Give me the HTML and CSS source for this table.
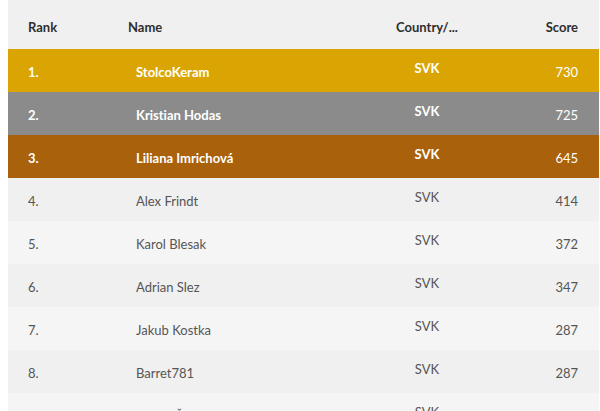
FILE: index.html
```html
<!DOCTYPE html>
<html>
<head>
<meta charset="utf-8">
<link rel="stylesheet" href="styles.css">
</head>
<body>
<table class="board">
  <thead>
    <tr class="head">
      <th class="c-rank">Rank</th>
      <th class="c-name">Name</th>
      <th class="c-country">Country/...</th>
      <th class="c-score">Score</th>
    </tr>
  </thead>
  <tbody>
    <tr class="top gold"><td class="c-rank">1.</td><td class="c-name">StolcoKeram</td><td class="c-country"><span>SVK</span></td><td class="c-score">730</td></tr>
    <tr class="top silver"><td class="c-rank">2.</td><td class="c-name">Kristian Hodas</td><td class="c-country"><span>SVK</span></td><td class="c-score">725</td></tr>
    <tr class="top bronze"><td class="c-rank">3.</td><td class="c-name">Liliana Imrichová</td><td class="c-country"><span>SVK</span></td><td class="c-score">645</td></tr>
    <tr class="odd"><td class="c-rank">4.</td><td class="c-name">Alex Frindt</td><td class="c-country"><span>SVK</span></td><td class="c-score">414</td></tr>
    <tr class="even"><td class="c-rank">5.</td><td class="c-name">Karol Blesak</td><td class="c-country"><span>SVK</span></td><td class="c-score">372</td></tr>
    <tr class="odd"><td class="c-rank">6.</td><td class="c-name">Adrian Slez</td><td class="c-country"><span>SVK</span></td><td class="c-score">347</td></tr>
    <tr class="even"><td class="c-rank">7.</td><td class="c-name">Jakub Kostka</td><td class="c-country"><span>SVK</span></td><td class="c-score">287</td></tr>
    <tr class="odd"><td class="c-rank">8.</td><td class="c-name">Barret781</td><td class="c-country"><span>SVK</span></td><td class="c-score">287</td></tr>
    <tr class="even"><td class="c-rank">9.</td><td class="c-name">Tomáš Šebo</td><td class="c-country"><span>SVK</span></td><td class="c-score">256</td></tr>
  </tbody>
</table>
</body>
</html>
```
FILE: styles.css
```css
html, body {
  margin: 0;
  padding: 0;
  background: #ffffff;
  overflow: hidden;
}
body {
  padding-left: 8px;
  font-family: Lato, "Open Sans", sans-serif;
  font-size: 13px;
  font-variant-ligatures: none;
}
.board {
  width: 591px;
  border-collapse: collapse;
  table-layout: fixed;
}
.board th, .board td {
  padding: 2px 0 0 0;
  height: 41px;
  vertical-align: middle;
  white-space: nowrap;
}
.head th {
  height: 45px;
  padding-top: 4px;
  background: #f0f0f0;
  color: #2e2e2e;
  font-weight: 700;
  text-align: left;
}
.c-rank { width: 100px; padding-left: 20px !important; }
.c-name { width: 240px; }
tbody .c-name { padding-left: 8px !important; }
.c-country { width: 118px; text-align: center !important; }
.c-score { text-align: right !important; padding-right: 21px !important; }
.c-country span {
  position: relative;
  top: -4px;
}
.top td {
  color: #ffffff;
  font-weight: 700;
}
.top .c-score { font-weight: 400; }
.gold { background: #daa503; }
.silver { background: #8b8b8b; }
.bronze { background: #a9610c; }
.odd { background: #f0f0f0; }
.even { background: #f5f5f5; }
.odd td, .even td { color: #555555; }
```
